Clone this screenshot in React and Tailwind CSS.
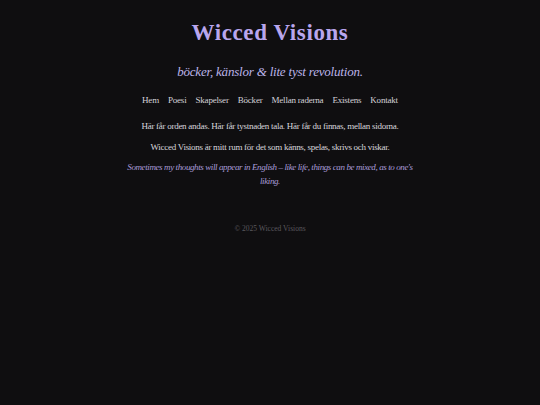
import React from "react";

const navItems = ["Hem", "Poesi", "Skapelser", "Böcker", "Mellan raderna", "Existens", "Kontakt"];

export default function App() {
  return (
    <div className="min-h-screen w-full bg-[#0f0e10] text-[#d8d6dc] font-['Liberation_Serif',serif]">
      <div className="mx-auto w-[300px] text-center pt-[19px]">
        <h1 className="text-[23px] leading-[28px] font-bold tracking-[0.6px] text-[#b9a6ee]">
          Wicced Visions
        </h1>
        <p className="mt-[16px] text-[13px] leading-[18px] italic tracking-[-0.2px] text-[#bcb4e8]">
          böcker, känslor &amp; lite tyst revolution.
        </p>
        <nav className="mt-[13px] flex justify-center gap-[9px] text-[9px] leading-[12px] tracking-[-0.2px] text-[#d4d2d8]">
          {navItems.map((item) => (
            <a key={item} href="#" className="whitespace-nowrap">
              {item}
            </a>
          ))}
        </nav>
        <p className="mt-[13px] text-[9px] leading-[14px] tracking-[-0.28px] whitespace-nowrap">
          Här får orden andas. Här får tystnaden tala. Här får du finnas, mellan sidorna.
        </p>
        <p className="mt-[7px] text-[9px] leading-[14px] tracking-[-0.28px] whitespace-nowrap">
          Wicced Visions är mitt rum för det som känns, spelas, skrivs och viskar.
        </p>
        <p className="mt-[6px] text-[9px] leading-[14px] italic tracking-[-0.4px] text-[#a99cd8]">
          Sometimes my thoughts will appear in English – like life, things can be mixed, as to one's liking.
        </p>
        <footer className="mt-[35px] text-[7.5px] leading-[12px] text-[#5a585e]">
          © 2025 Wicced Visions
        </footer>
      </div>
    </div>
  );
}
